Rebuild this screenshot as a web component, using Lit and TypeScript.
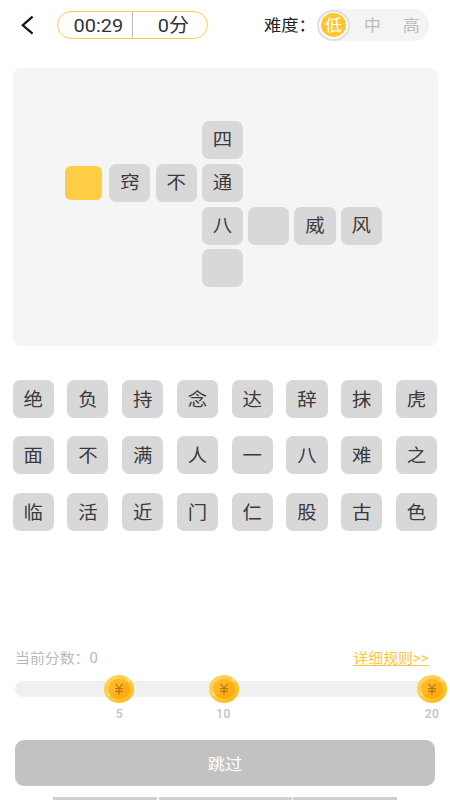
import { LitElement, html, css, nothing } from "lit";
import { customElement, property } from "lit/decorators.js";

@customElement("word-tile")
class WordTile extends LitElement {
  @property() char = "";
  @property({ type: Boolean, reflect: true }) active = false;

  static styles = css`
    :host {
      display: flex;
      align-items: center;
      justify-content: center;
      box-sizing: border-box;
      width: 41.2px;
      height: 38px;
      border-radius: 7px;
      background: #d8d8d8;
      color: #3a3a3a;
    }
    :host([active]) {
      width: 37.4px;
      height: 34.6px;
      place-self: center;
      border-radius: 6px;
      background: #ffcc45;
    }
    .char {
      font-size: 19.4px;
      line-height: 38px;
      transform: translateY(var(--char-shift, 0.7px)) scaleY(0.93);
    }
  `;

  render() {
    return this.char ? html`<span class="char">${this.char}</span>` : nothing;
  }
}

@customElement("gold-coin")
class GoldCoin extends LitElement {
  static styles = css`
    :host {
      display: block;
      width: 30px;
      height: 28px;
    }
    .coin {
      display: block;
      width: 100%;
      height: 100%;
    }
  `;

  render() {
    return html`<svg class="coin" viewBox="0 0 30 28" preserveAspectRatio="none">
      <defs>
        <linearGradient id="rim" x1="0" y1="0" x2="1" y2="1">
          <stop offset="0" stop-color="#ffd35c" />
          <stop offset="0.5" stop-color="#ffcd45" />
          <stop offset="0.72" stop-color="#ffc226" />
          <stop offset="1" stop-color="#ffb90f" />
        </linearGradient>
        <linearGradient id="face" x1="0" y1="0" x2="1" y2="1">
          <stop offset="0.45" stop-color="#ffb72a" />
          <stop offset="0.55" stop-color="#ffac14" />
        </linearGradient>
      </defs>
      <ellipse cx="15" cy="14" rx="15" ry="14" fill="url(#rim)" />
      <path d="M2.6 17.5l2-.8 1.8 3.2-1.7 1.6zM22.5 4l2-1 2.1 2.4-1.6 1.5z" fill="#ffdf80" />
      <ellipse cx="15" cy="14" rx="10.8" ry="10.2" fill="url(#face)" />
      <path d="M11.6 8.9l3.4 4.4 3.4-4.4M11 13.7h8M11 16.3h8M15 13v6.6" fill="none" stroke="#bd780c" stroke-width="1.3" />
    </svg>`;
  }
}

@customElement("app-root")
class AppRoot extends LitElement {
  private board = [
    { char: "四", col: 4, row: 1 },
    { char: "", col: 1, row: 2, active: true },
    { char: "窍", col: 2, row: 2 },
    { char: "不", col: 3, row: 2 },
    { char: "通", col: 4, row: 2 },
    { char: "八", col: 4, row: 3 },
    { char: "", col: 5, row: 3 },
    { char: "威", col: 6, row: 3 },
    { char: "风", col: 7, row: 3 },
    { char: "", col: 4, row: 4 },
  ];
  private bank = [..."绝负持念达辞抹虎面不满人一八难之临活近门仁股古色"];
  private milestones = [
    { score: 5, at: 25 },
    { score: 10, at: 50 },
    { score: 20, at: 100 },
  ];

  static styles = css`
    :host {
      display: flex;
      flex-direction: column;
      box-sizing: border-box;
      width: 450px;
      height: 800px;
      overflow: hidden;
      background: #fff;
      font-family: Roboto, "Noto Sans CJK SC", sans-serif;
    }
    .squat {
      display: inline-block;
      transform: scaleY(0.94);
      white-space: nowrap;
    }
    .header {
      display: flex;
      align-items: center;
      height: 50px;
      padding: 0 21px;
    }
    .back {
      width: 14px;
      height: 20px;
      margin-right: 22px;
    }
    .status {
      display: flex;
      box-sizing: border-box;
      width: 151px;
      height: 28px;
      border: 1.5px solid #ffcc45;
      border-radius: 14px;
      font-size: 20px;
      line-height: 26px;
      color: #333;
    }
    .time {
      box-sizing: border-box;
      width: 74.5px;
      padding-left: 15.5px;
      border-right: 1px solid #bbb;
    }
    .score {
      padding-left: 25.2px;
    }
    .label {
      width: 53px;
      margin-left: 56px;
      font-size: 17.3px;
      line-height: 24px;
      color: #222;
    }
    .levels {
      display: flex;
      align-items: center;
      width: 112px;
      height: 32px;
      border-radius: 16px;
      background: #f4f4f4;
      font-size: 17px;
      color: #bbb;
    }
    .level {
      flex: 0 0 38.7px;
      text-align: center;
      line-height: 24px;
    }
    .chosen {
      display: flex;
      align-items: center;
      justify-content: center;
      flex: 0 0 33px;
      box-sizing: border-box;
      height: 31px;
      border: 2px solid #dfdfdf;
      border-radius: 50%;
      background: #fff;
      margin-right: 3.2px;
    }
    .dot {
      display: flex;
      align-items: center;
      justify-content: center;
      width: 25.6px;
      height: 24px;
      border-radius: 50%;
      background: #ffc62f;
      color: #fff;
      line-height: 22px;
    }
    .dot .squat {
      transform: translateY(0.2px) scaleY(0.94);
    }
    .board {
      display: grid;
      box-sizing: border-box;
      grid-template-columns: repeat(7, 41.2px);
      grid-template-rows: repeat(4, 38px);
      gap: 4.8px 5.1px;
      width: 425.5px;
      height: 277.5px;
      margin: 18px 0 0 12.5px;
      padding: 53px 0 0 50.5px;
      border-radius: 8px;
      background: #f5f5f5;
    }
    .bank {
      --char-shift: 1.7px;
      display: grid;
      grid-template-columns: repeat(8, 41.2px);
      gap: 18.7px 13.6px;
      margin: 34.3px 0 0 12.5px;
    }
    .summary {
      display: flex;
      justify-content: space-between;
      margin: 116px 21.5px 0 15px;
      height: 22px;
      font-size: 14.9px;
      line-height: 23px;
      color: #b8b8b8;
    }
    .rules {
      color: #fbc63d;
      border-bottom: 1px solid #fbc63d;
      height: 18px;
      line-height: 23px;
    }
    .track {
      position: relative;
      width: 417px;
      height: 16.3px;
      margin: 11.5px 0 0 15px;
      border-radius: 8px 0 0 8px;
      background: #f0f0f0;
    }
    .milestone {
      position: absolute;
      top: -6px;
      display: flex;
      flex-direction: column;
      align-items: center;
      width: 30px;
      transform: translateX(-50%);
      font-size: 12px;
      font-weight: 500;
      line-height: 14px;
      color: #c2c2c2;
    }
    .points {
      margin-top: 4px;
      letter-spacing: 0.4px;
    }
    .skip {
      display: flex;
      align-items: center;
      justify-content: center;
      height: 46px;
      margin: 42.7px 15px 0;
      border-radius: 9px;
      background: #c2c2c2;
      color: #fff;
      font-size: 17.3px;
      line-height: 24px;
    }
    .skip .squat {
      transform: translateY(1px) scaleY(0.94);
    }
    .tabs {
      display: grid;
      grid-template-columns: 104.5px 133px 104.5px;
      gap: 1.4px;
      height: 3px;
      margin: auto 0 0 52.7px;
    }
    .tab {
      background: #d0d0d0;
    }
  `;

  render() {
    return html`
      <div class="header">
        <svg class="back" viewBox="0 0 14 20">
          <path d="M11.6 1.6 1.8 10.3l9.8 8.4" fill="none" stroke="#111" stroke-width="2.2" />
        </svg>
        <div class="status">
          <div class="time"><span class="squat">00:29</span></div>
          <div class="score"><span class="squat">0分</span></div>
        </div>
        <div class="label"><span class="squat">难度：</span></div>
        <div class="levels">
          <div class="chosen"><div class="dot"><span class="squat">低</span></div></div>
          <div class="level"><span class="squat">中</span></div>
          <div class="level"><span class="squat">高</span></div>
        </div>
      </div>
      <div class="board">
        ${this.board.map(
          (t) => html`<word-tile
            .char=${t.char}
            ?active=${!!t.active}
            style="grid-area: ${t.row} / ${t.col}"
          ></word-tile>`
        )}
      </div>
      <div class="bank">${this.bank.map((c) => html`<word-tile .char=${c}></word-tile>`)}</div>
      <div class="summary">
        <span class="squat">当前分数：0</span>
        <span class="rules"><span class="squat">详细规则&gt;&gt;</span></span>
      </div>
      <div class="track">
        ${this.milestones.map(
          (m) => html`<div class="milestone" style="left: ${m.at}%">
            <gold-coin></gold-coin><span class="points">${m.score}</span>
          </div>`
        )}
      </div>
      <div class="skip"><span class="squat">跳过</span></div>
      <div class="tabs"><div class="tab"></div><div class="tab"></div><div class="tab"></div></div>
    `;
  }
}
